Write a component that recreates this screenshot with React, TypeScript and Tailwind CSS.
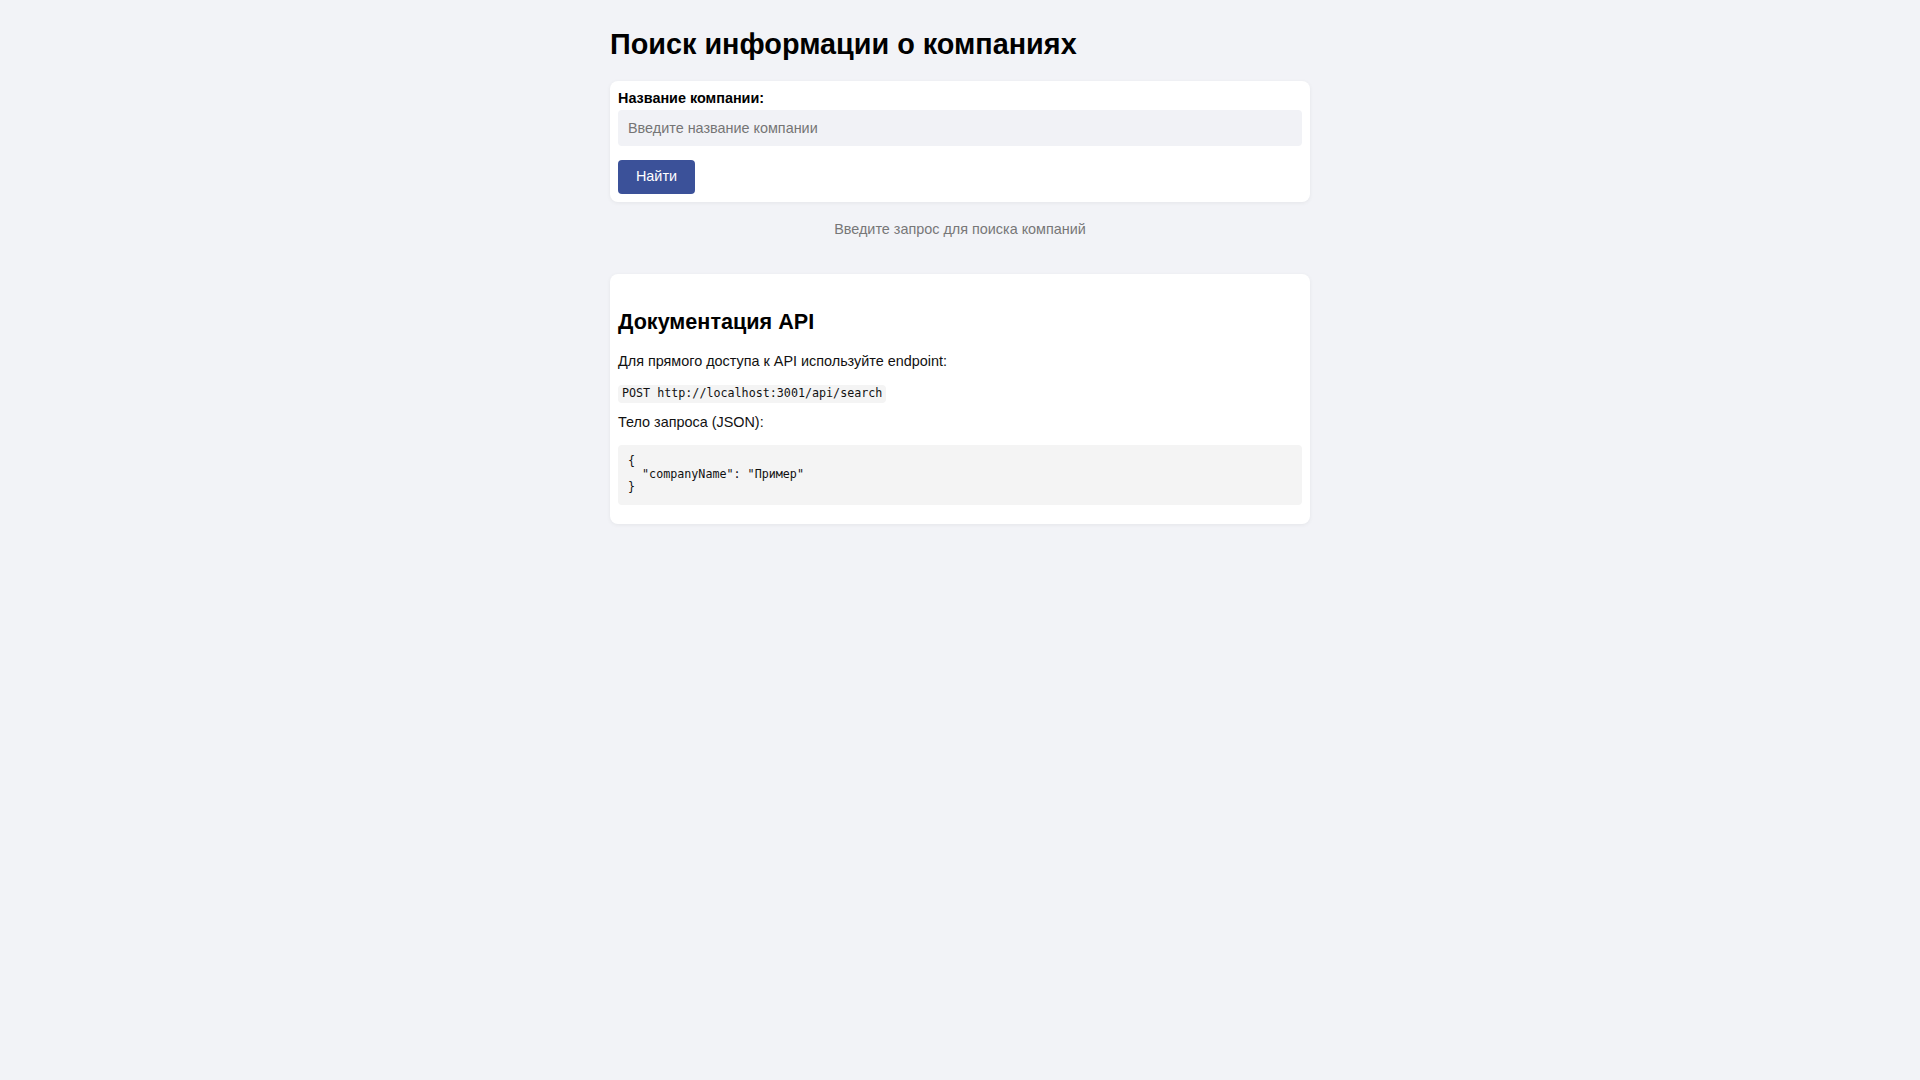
import React from "react";

export default function App() {
  return (
    <div className="min-h-screen bg-[#f2f3f7] font-['Liberation_Sans',Arial,sans-serif] text-black">
      <div className="w-[700px] mx-auto pt-[28px]">
        <h1 className="text-[28.8px] font-bold leading-[33px]">Поиск информации о компаниях</h1>
        <div className="mt-[20px] bg-white rounded-lg p-2 shadow-[0_1px_4px_rgba(0,0,0,0.06)]">
          <label className="block mt-[1px] text-[14.4px] font-bold leading-[17px] mb-[3px]">Название компании:</label>
          <input
            type="text"
            placeholder="Введите название компании"
            className="block w-full h-[36px] px-[10px] bg-[#f1f2f6] rounded text-[14.4px] outline-none placeholder:text-[#757575]"
          />
          <button className="mt-[14px] h-[34px] w-[77px] bg-[#3b5199] text-white text-[14.4px] rounded block">
            Найти
          </button>
        </div>
        <div className="mt-[19px] text-center text-[14.4px] leading-[17px] text-[#777777]">
          Введите запрос для поиска компаний
        </div>
        <div className="mt-[36px] bg-white rounded-lg p-2 shadow-[0_1px_4px_rgba(0,0,0,0.06)]">
          <h2 className="mt-[27px] text-[21.6px] font-bold leading-[25px]">Документация API</h2>
          <p className="mt-[19px] text-[14.4px] leading-[17px] text-[#111]">
            Для прямого доступа к API используйте endpoint:
          </p>
          <div className="mt-[15px] flex">
            <code className="block bg-[#f4f4f4] rounded px-[4px] py-[2px] font-['DejaVu_Sans_Mono',monospace] text-[11.7px] leading-[13.6px] text-[#111]">
              POST http://localhost:3001/api/search
            </code>
          </div>
          <p className="mt-[11px] text-[14.4px] leading-[17px] text-[#111]">Тело запроса (JSON):</p>
          <pre className="mt-[14px] mb-[11px] bg-[#f4f4f4] rounded p-[10px] font-['DejaVu_Sans_Mono',monospace] text-[11.7px] leading-[13.4px] text-[#111]">
{`{
  "companyName": "Пример"
}`}
          </pre>
        </div>
      </div>
    </div>
  );
}
